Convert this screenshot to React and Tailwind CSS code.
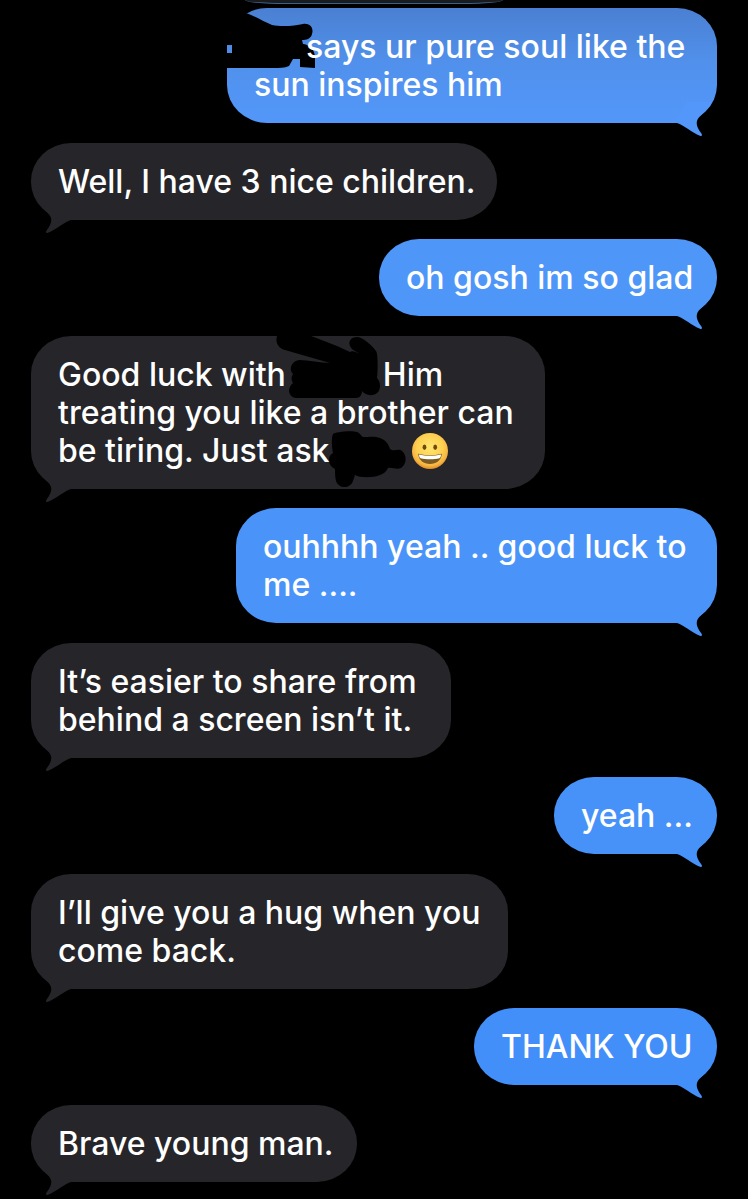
// App.jsx - Message thread with sent and received bubbles
import React from 'react';
import clsx from 'clsx';

const GrinningFace = () => (
  <svg viewBox="0 0 36 36" className="inline-block w-9 h-9 align-[-7px]" role="img" aria-label="grinning face">
    <defs>
      <radialGradient id="face" cx="50%" cy="40%" r="60%">
        <stop offset="0" stopColor="#ffe66e" />
        <stop offset="0.6" stopColor="#fdd050" />
        <stop offset="0.85" stopColor="#f7b541" />
        <stop offset="1" stopColor="#e08a28" />
      </radialGradient>
    </defs>
    <circle cx="18" cy="18" r="18" fill="url(#face)" />
    <ellipse cx="12.5" cy="14.2" rx="1.9" ry="2.7" fill="#70490f" />
    <ellipse cx="23.2" cy="14.2" rx="1.9" ry="2.7" fill="#70490f" />
    <path d="M6.2 21.6C6 20.9 6.6 20.7 7.4 20.9C14 22.6 22 22.6 28.6 20.9C29.4 20.7 30 20.9 29.8 21.6C29 27.4 24.4 31 18 31C11.6 31 7 27.4 6.2 21.6Z" fill="#7d5a22" />
    <path d="M7 21.4C14 23.2 22 23.2 29 21.4C29 23.4 28.4 24.8 27.4 25.2C22 26.6 14 26.6 8.6 25.2C7.6 24.8 7 23.4 7 21.4Z" fill="#fff" />
  </svg>
);

const NameScribble = () => (
  <svg viewBox="0 0 92 64" className="absolute left-0 top-0 w-[92px] h-16" aria-hidden="true">
    <path d="M-2 -2H26L19 5C28 8 37 14 45 17C54 19 68 18 76 16C83 15 87 20 85 26C84 31 79 32 75 32L76 36C84 37 88 43 88 50V60L73 59V51H66L62 58C58 60 52 60 46 60H-2V45H5V37H-2Z" />
  </svg>
);

const FriendScribble = () => (
  <svg viewBox="0 0 400 154" className="absolute left-0 top-0 w-[400px] h-[154px]" aria-hidden="true">
    <path d="M247 -2H275L306 10L319 16C322 14 325 17 328 17C314 12 317 1 326 1C331 1 341 9 345 15C347 18 347 32 346 42C350 46 350 54 346 57C341 61 334 59 331 55C331 59 329 62 325 62H266C258 62 255 53 262 47C260 44 260 41 262 38C257 33 261 25 268 24C278 24 289 27 299 27L254 14C247 12 243 5 247 -2Z" />
    <path d="M302 98C304 96 320 94 326 96C329 97 330 100 332 101C339 101 344 100 349 102C355 104 358 109 359 113C363 116 367 112 371 115C376 119 376 128 370 132C366 134 361 131 357 132C355 136 352 138 349 139C342 142 329 142 324 139L322 145C319 153 308 153 305 145C304 141 304 137 304 133C297 130 296 120 302 117C301 111 300 103 302 98Z" />
  </svg>
);

const messages = [
  {
    sent: true,
    size: 'w-[490px]',
    color: 'bg-linear-to-b from-[#4a80d2] via-[#5191ed] via-50% to-[#5297f9]',
    tail: '#5297f9',
    text: (
      <>
        <span className="inline-block w-[52px]" />says ur pure soul like the<br />sun inspires him
      </>
    ),
    overlay: <NameScribble />,
  },
  { size: 'w-[466px]', text: 'Well, I have 3 nice children.' },
  { sent: true, size: 'w-[338px]', color: 'bg-[#4f96f9]', tail: '#4f96f9', text: 'oh gosh im so glad' },
  {
    size: 'w-[514px]',
    text: (
      <>
        Good luck with<span className="inline-block w-[97px]" />Him<br />
        treating you like a brother can<br />
        be tiring. Just ask<span className="inline-block w-[82px]" /><GrinningFace />
      </>
    ),
    overlay: <FriendScribble />,
  },
  {
    sent: true,
    size: 'w-[481px]',
    color: 'bg-[#4a94f9]',
    tail: '#4a94f9',
    text: <>ouhhhh yeah .. good luck to<br />me ....</>,
  },
  { size: 'w-[420px]', text: <>It’s easier to share from<br />behind a screen isn’t it.</> },
  { sent: true, size: 'w-[163px]', color: 'bg-[#4692f9]', tail: '#4692f9', text: 'yeah ...' },
  { size: 'w-[477px]', text: <>I’ll give you a hug when you<br />come back.</> },
  { sent: true, size: 'w-[243px]', color: 'bg-[#428ff9]', tail: '#428ff9', text: 'THANK YOU' },
  { size: 'w-[326px]', text: 'Brave young man.' },
];

const Tail = ({ sent, color }) => (
  <svg
    viewBox="0 0 40 40"
    className={clsx('absolute -bottom-3.5 w-10 h-10', sent ? 'right-0' : 'left-0 -scale-x-100')}
    fill={color}
    aria-hidden="true"
  >
    <path d="M0 26C7 28 15 36 23 38.7C25 39.4 25.6 38 24.4 36.4C21 32 19 28 20 24C21 19 30 15 35 5L10 5L0 20Z" />
  </svg>
);

const Bubble = ({ message }) => {
  const { sent, size, color, tail, text, overlay } = message;

  return (
    <li
      className={clsx(
        'relative max-w-full px-[27px] pt-5 pb-[19px] rounded-[40px/38px] whitespace-nowrap',
        size,
        sent ? 'self-end mb-5' : 'self-start mb-[19px]',
        sent ? color : 'bg-[#262529]'
      )}
    >
      <Tail sent={sent} color={sent ? tail : '#262529'} />
      {overlay}
      <p className="relative">{text}</p>
    </li>
  );
};

const App = () => {
  return (
    <main className="min-h-screen overflow-hidden bg-black px-[31px] font-['Inter',sans-serif] text-[32px] leading-[38px] font-medium text-white">
      {/* Bottom edge of the previous message */}
      <div className="h-1 w-[258px] ml-auto mr-[214px] mb-1 rounded-b-[40px_4px] border-b border-[#38618f] bg-[#1b1b1d]" />

      <ul className="flex flex-col">
        {messages.map((message, i) => (
          <Bubble key={i} message={message} />
        ))}
      </ul>
    </main>
  );
};

export default App;
